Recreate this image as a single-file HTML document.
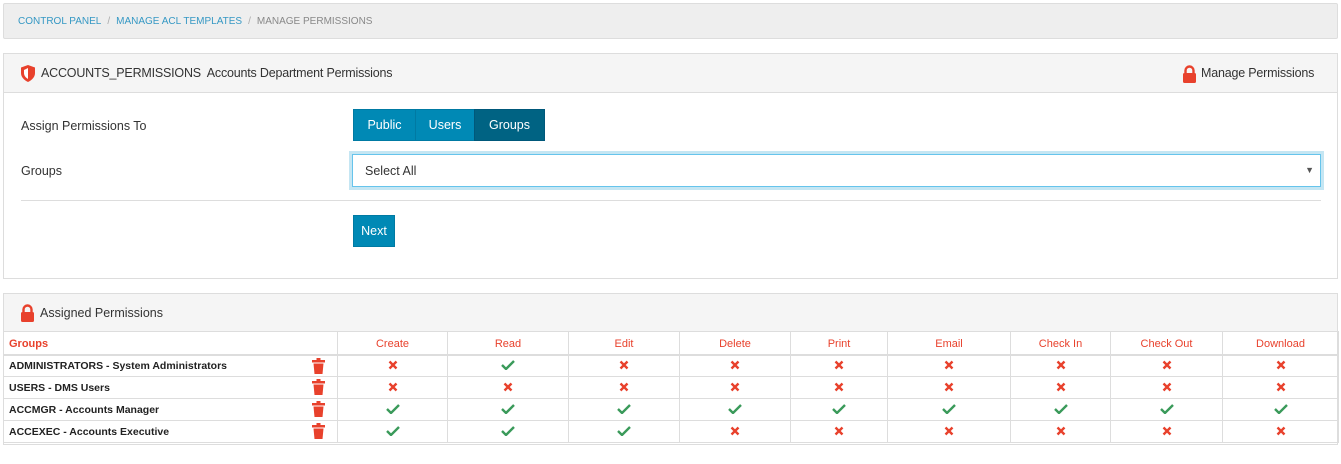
<!DOCTYPE html>
<html><head><meta charset="utf-8">
<style>
*{box-sizing:border-box;margin:0;padding:0}
body{width:1341px;height:464px;background:#fff;font-family:"Liberation Sans",sans-serif;font-size:12.5px;color:#333;position:relative;overflow:hidden}
.abs{position:absolute}
.bc{left:3px;top:3px;width:1335px;height:36px;background:#eee;border:1px solid #ddd;border-radius:2px;font-size:10px;color:#888;padding:12px 0 0 14px}
.bc a{color:#3598c4;text-decoration:none}
.bc .s{color:#aaa;margin:0 6px}
.panel{left:3px;width:1335px;border:1px solid #ddd;background:#fff}
.ph{background:#f5f5f5;border-bottom:1px solid #ddd;position:relative}
.btn{position:absolute;background:#0089b5;color:#fff;font-size:12.5px;text-align:center;border:1px solid #007aa3}
table{border-collapse:collapse;position:absolute;left:3px;top:331px;width:1335px;table-layout:fixed}
td,th{border:1px solid #ddd;height:22px;font-size:10.5px;text-align:center;padding:1px 0 0}
th{color:#e8412c;font-weight:normal;font-size:11px;border-bottom:2px solid #ddd;height:23px;padding-top:2px}
td:first-child,th:first-child{text-align:left;padding-left:5px}
td:first-child{font-weight:bold;color:#222;position:relative}
.tr{position:absolute;left:308px;top:2px}
</style></head><body>
<div class="abs bc"><a>CONTROL PANEL</a><span class="s">/</span><a>MANAGE ACL TEMPLATES</a><span class="s">/</span>MANAGE PERMISSIONS</div>

<div class="abs panel" style="top:53px;height:226px">
 <div class="ph" style="height:39px">
  <svg class="abs" style="left:16px;top:11px" width="16" height="17" viewBox="0 0 16 17"><path d="M8 0L15 2.5V8c0 4-3 7-7 9C4 15 1 12 1 8V2.5z" fill="#e8412c"/><path d="M8 3v11c-2.5-1.5-4-3.5-4-6V5z" fill="#fff"/></svg>
  <div class="abs" style="left:37px;top:12px;letter-spacing:-0.2px">ACCOUNTS_PERMISSIONS&nbsp; Accounts Department Permissions</div>
  <svg class="abs" style="left:1178px;top:11px" width="15" height="18" viewBox="0 0 15 18"><path d="M3.5 8V5.5a4 4 0 0 1 8 0V8" fill="none" stroke="#e8412c" stroke-width="2.4"/><rect x="1" y="8" width="13" height="10" rx="1.5" fill="#e8412c"/></svg>
  <div class="abs" style="left:1197px;top:12px;letter-spacing:-0.2px">Manage Permissions</div>
 </div>
 <div class="abs" style="left:17px;top:65px">Assign Permissions To</div>
 <div class="btn" style="left:349px;top:55px;width:63px;height:32px;line-height:30px">Public</div>
 <div class="btn" style="left:411px;top:55px;width:60px;height:32px;line-height:30px">Users</div>
 <div class="btn" style="left:470px;top:55px;width:71px;height:32px;line-height:30px;background:#006383;border-color:#00587a">Groups</div>
 <div class="abs" style="left:17px;top:110px">Groups</div>
 <div class="abs" style="left:348px;top:100px;width:969px;height:33px;border:1px solid #66c4ec;box-shadow:0 0 0 3px #c5e6f3;padding:9px 12px">Select All<span class="abs" style="right:6px;top:10px;font-size:9px;color:#555">▼</span></div>
 <div class="abs" style="left:17px;top:146px;width:1300px;border-top:1px solid #ddd"></div>
 <div class="btn" style="left:349px;top:161px;width:42px;height:32px;line-height:30px">Next</div>
</div>

<div class="abs panel" style="top:293px;height:152px">
 <div class="ph" style="height:38px">
  <svg class="abs" style="left:16px;top:10px" width="15" height="18" viewBox="0 0 15 18"><path d="M3.5 8V5.5a4 4 0 0 1 8 0V8" fill="none" stroke="#e8412c" stroke-width="2.4"/><rect x="1" y="8" width="13" height="10" rx="1.5" fill="#e8412c"/></svg>
  <div class="abs" style="left:36px;top:12px">Assigned Permissions</div>
 </div>
</div>
<svg width="0" height="0" style="position:absolute"><defs>
<symbol id="x" viewBox="0 0 10 10"><path d="M1.5 1.5L8.5 8.5M8.5 1.5L1.5 8.5" stroke="#e8412c" stroke-width="2.4"/></symbol>
<symbol id="c" viewBox="0 0 14 10"><path d="M1 5l4 4 8-8" stroke="#3a9a5a" stroke-width="2.4" fill="none"/></symbol>
<symbol id="t" viewBox="0 0 13 16"><rect x="0" y="2" width="13" height="2.5" fill="#e8412c"/><rect x="4.5" y="0" width="4" height="2" fill="#e8412c"/><path d="M1.5 5.5h10l-1 10.5h-8z" fill="#e8412c"/></symbol>
</defs></svg>
<table>
<colgroup><col style="width:334px"><col style="width:110px"><col style="width:121px"><col style="width:111px"><col style="width:111px"><col style="width:97px"><col style="width:123px"><col style="width:100px"><col style="width:112px"><col style="width:116px"></colgroup>
<tr><th style="font-weight:bold">Groups</th><th>Create</th><th>Read</th><th>Edit</th><th>Delete</th><th>Print</th><th>Email</th><th>Check In</th><th>Check Out</th><th>Download</th></tr>
<tr><td>ADMINISTRATORS - System Administrators<svg class="tr" width="13" height="16"><use href="#t"/></svg></td><td><svg width="10" height="10"><use href="#x"/></svg></td><td><svg width="14" height="10"><use href="#c"/></svg></td><td><svg width="10" height="10"><use href="#x"/></svg></td><td><svg width="10" height="10"><use href="#x"/></svg></td><td><svg width="10" height="10"><use href="#x"/></svg></td><td><svg width="10" height="10"><use href="#x"/></svg></td><td><svg width="10" height="10"><use href="#x"/></svg></td><td><svg width="10" height="10"><use href="#x"/></svg></td><td><svg width="10" height="10"><use href="#x"/></svg></td></tr>
<tr><td>USERS - DMS Users<svg class="tr" width="13" height="16"><use href="#t"/></svg></td><td><svg width="10" height="10"><use href="#x"/></svg></td><td><svg width="10" height="10"><use href="#x"/></svg></td><td><svg width="10" height="10"><use href="#x"/></svg></td><td><svg width="10" height="10"><use href="#x"/></svg></td><td><svg width="10" height="10"><use href="#x"/></svg></td><td><svg width="10" height="10"><use href="#x"/></svg></td><td><svg width="10" height="10"><use href="#x"/></svg></td><td><svg width="10" height="10"><use href="#x"/></svg></td><td><svg width="10" height="10"><use href="#x"/></svg></td></tr>
<tr><td>ACCMGR - Accounts Manager<svg class="tr" width="13" height="16"><use href="#t"/></svg></td><td><svg width="14" height="10"><use href="#c"/></svg></td><td><svg width="14" height="10"><use href="#c"/></svg></td><td><svg width="14" height="10"><use href="#c"/></svg></td><td><svg width="14" height="10"><use href="#c"/></svg></td><td><svg width="14" height="10"><use href="#c"/></svg></td><td><svg width="14" height="10"><use href="#c"/></svg></td><td><svg width="14" height="10"><use href="#c"/></svg></td><td><svg width="14" height="10"><use href="#c"/></svg></td><td><svg width="14" height="10"><use href="#c"/></svg></td></tr>
<tr><td>ACCEXEC - Accounts Executive<svg class="tr" width="13" height="16"><use href="#t"/></svg></td><td><svg width="14" height="10"><use href="#c"/></svg></td><td><svg width="14" height="10"><use href="#c"/></svg></td><td><svg width="14" height="10"><use href="#c"/></svg></td><td><svg width="10" height="10"><use href="#x"/></svg></td><td><svg width="10" height="10"><use href="#x"/></svg></td><td><svg width="10" height="10"><use href="#x"/></svg></td><td><svg width="10" height="10"><use href="#x"/></svg></td><td><svg width="10" height="10"><use href="#x"/></svg></td><td><svg width="10" height="10"><use href="#x"/></svg></td></tr>
</table>
</body></html>
